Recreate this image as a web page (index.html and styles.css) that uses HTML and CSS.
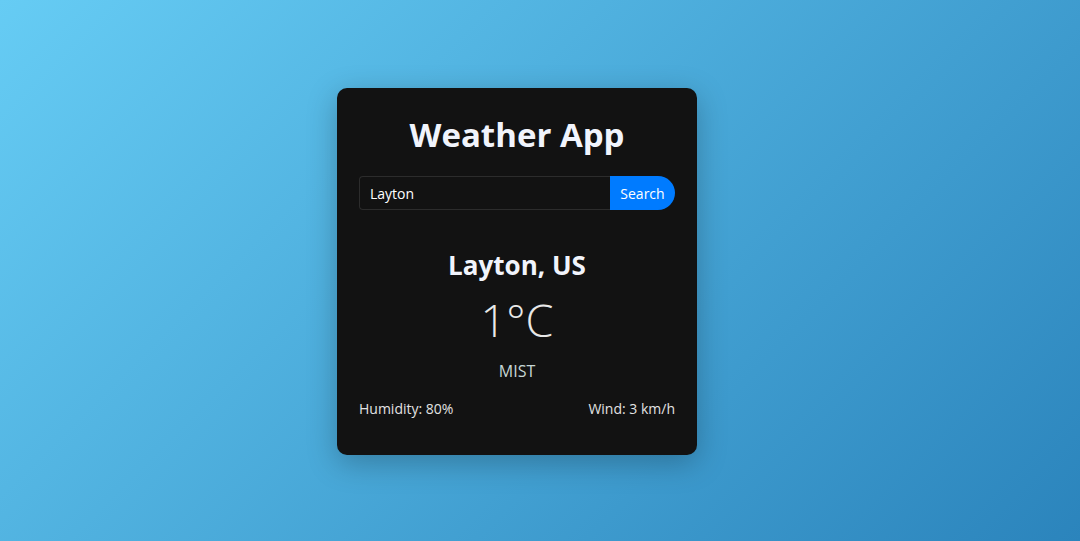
FILE: index.html
```html
<!DOCTYPE html>
<html lang="en">
<head>
<meta charset="utf-8">
<title>Weather App</title>
<link rel="stylesheet" href="styles.css">
</head>
<body>
  <div class="card">
    <h1 class="title">Weather App</h1>
    <div class="search">
      <input class="search-input" type="text" value="Layton">
      <button class="search-btn">Search</button>
    </div>
    <div class="weather">
      <h2 class="city">Layton, US</h2>
      <div class="temp">1°C</div>
      <div class="desc">MIST</div>
      <div class="details">
        <span>Humidity: 80%</span>
        <span>Wind: 3 km/h</span>
      </div>
    </div>
  </div>
</body>
</html>
```
FILE: styles.css
```css
* { box-sizing: border-box; }
html, body { height: 100%; }
body {
  margin: 0;
  padding-right: 46px;
  font-family: "Open Sans", "Noto Sans", sans-serif;
  background: linear-gradient(135deg, #66ccf4, #2b84bc);
  display: flex;
  justify-content: center;
  align-items: flex-start;
  color: #fff;
}
.card {
  margin-top: 88px;
  width: 360px;
  height: 367px;
  background: #121212;
  border-radius: 10px;
  padding: 22px 22px;
  box-shadow: 0 8px 30px rgba(0, 0, 0, 0.25);
  display: flex;
  flex-direction: column;
}
.title {
  margin: 0;
  text-align: center;
  font-size: 33px;
  font-weight: 700;
  line-height: 50px;
  color: #f1f4fc;
}
.search {
  display: flex;
  margin-top: 16px;
  height: 34px;
}
.search-input {
  flex: 1;
  min-width: 0;
  background: #121212;
  border: 1px solid #2c2c2c;
  border-right: none;
  border-radius: 4px 0 0 4px;
  color: #fff;
  font-family: inherit;
  font-size: 14px;
  padding: 0 10px;
  outline: none;
}
.search-btn {
  width: 65px;
  background: #007bff;
  color: #fff;
  border: none;
  border-radius: 0 17px 17px 0;
  font-family: inherit;
  font-size: 14px;
  padding: 0;
}
.weather {
  margin-top: 35px;
  text-align: center;
}
.city {
  margin: 0;
  font-size: 26px;
  font-weight: 700;
  line-height: 40px;
  color: #f1f4fc;
}
.temp {
  margin-top: 3px;
  font-size: 45px;
  font-weight: 300;
  line-height: 64px;
  color: #e8e8e8;
}
.desc {
  margin-top: 8px;
  font-size: 16px;
  line-height: 22px;
  color: #c6d6d6;
}
.details {
  margin-top: 17px;
  display: flex;
  justify-content: space-between;
  font-size: 14px;
  line-height: 20px;
  color: #e2e2e2;
}
```
